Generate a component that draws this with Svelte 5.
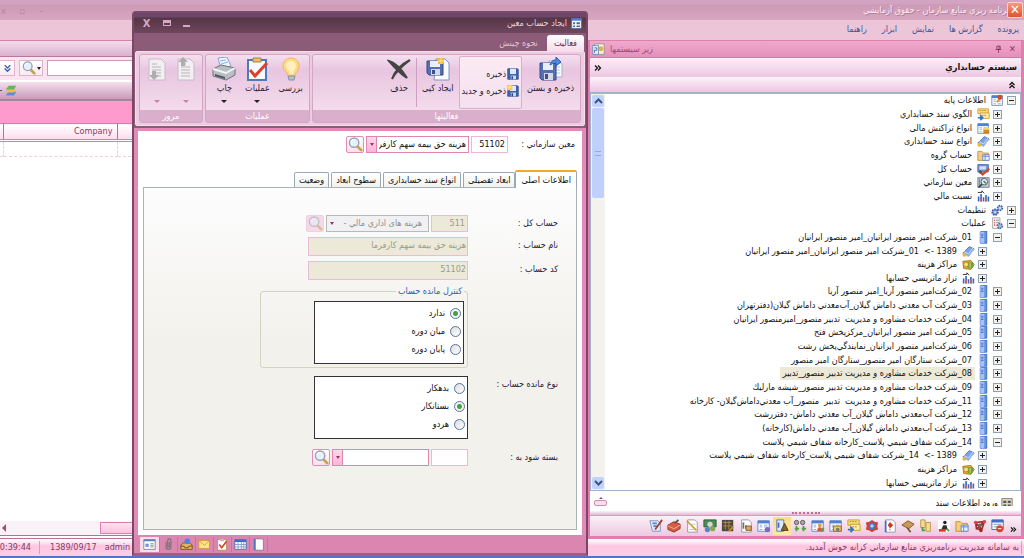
<script lang="ts">
  interface Node { label: string; level: number; icon: string; open?: boolean; selected?: boolean }

  const menus = ['پرونده', 'گزارش ها', 'نمایش', 'ابزار', 'راهنما'];

  const tree: Node[] = [
    { label: 'اطلاعات پایه', level: 0, icon: 'base', open: true },
    { label: 'الگوي سند حسابداري', level: 1, icon: 'pattern' },
    { label: 'انواع تراکنش مالی', level: 1, icon: 'coins' },
    { label: 'انواع سند حسابداری', level: 1, icon: 'books' },
    { label: 'حساب گروه', level: 1, icon: 'folder' },
    { label: 'حساب کل', level: 1, icon: 'ledger' },
    { label: 'معین سازماني', level: 1, icon: 'search' },
    { label: 'نسبت مالي', level: 1, icon: 'chart' },
    { label: 'تنظیمات', level: 0, icon: 'gears' },
    { label: 'عملیات', level: 0, icon: 'tasks', open: true },
    { label: '01_شرکت امیر منصور ایرانیان_امیر منصور ایرانیان', level: 1, icon: 'server', open: true },
    { label: '1389 ->  01_شرکت امیر منصور ایرانیان_امیر منصور ایرانیان', level: 2, icon: 'books' },
    { label: 'مراکز هزینه', level: 2, icon: 'money' },
    { label: 'تراز ماتریسي حسابها', level: 2, icon: 'chart' },
    { label: '02_شرکت‌امیر منصور آریا_امیر منصور آریا', level: 1, icon: 'server' },
    { label: '03_شرکت آب معدني داماش گیلان_آب‌معدني داماش گیلان(دفترتهران', level: 1, icon: 'server' },
    { label: '04_شرکت خدمات مشاوره و مدیریت  تدبیر منصور_امیرمنصور ایرانیان', level: 1, icon: 'server' },
    { label: '05_شرکت امیر منصور ایرانیان_مرکزپخش فتح', level: 1, icon: 'server' },
    { label: '06_شرکت‌امیر منصور ایرانیان_نمایندگي‌پخش رشت', level: 1, icon: 'server' },
    { label: '07_شرکت ستارگان امیر منصور_ستارگان امیر منصور', level: 1, icon: 'server' },
    { label: '08_شرکت خدمات مشاوره و مدیریت تدبیر منصور_تدبیر', level: 1, icon: 'server', selected: true },
    { label: '09_شرکت خدمات مشاوره و مدیریت تدبیر منصور_شیشه مارلیك', level: 1, icon: 'server' },
    { label: '11_شرکت خدمات مشاوره و مدیریت  تدبیر  منصور_آب معدني‌داماش‌گیلان- کارخانه', level: 1, icon: 'server' },
    { label: '12_شرکت آب‌معدني داماش گیلان_آب معدني داماش- دفتررشت', level: 1, icon: 'server' },
    { label: '13_شرکت آب‌معدني داماش گیلان_آب معدني داماش(کارخانه)', level: 1, icon: 'server' },
    { label: '14_شرکت شفاف شیمي پلاست_کارخانه شفاف شیمي پلاست', level: 1, icon: 'server', open: true },
    { label: '1389 ->  14_شرکت شفاف شیمي پلاست_کارخانه شفاف شیمي پلاست', level: 2, icon: 'books' },
    { label: 'مراکز هزینه', level: 2, icon: 'money' },
    { label: 'تراز ماتریسي حسابها', level: 2, icon: 'chart' },
  ];

  const shortcuts = [
    'calendarRed', 'molecule', 'folder', 'person', 'docs', 'hammer', 'redDoc', 'badge', 'pattern', 'report',
    'people', 'balance', 'form', 'notes', 'grid', 'ledgerDark', 'cash', 'draft', 'box', 'edit',
  ];
  const footTabs = ['card', 'clip', 'inbox', 'mail', 'check', 'calendar', 'page'];
  const tabs = ['اطلاعات اصلی', 'ابعاد تفصیلی', 'انواع سند حسابداری', 'سطوح ابعاد', 'وضعیت'];

  let activeTab = $state(0);
  let control = $state('ندارد');
  let nature = $state('بستانکار');

  const page = '<path d="M3 1h8l3 3v11H3z" fill="#fff" stroke="#8a93a8"/>';
  const table = '<path d="M1 2h13v12H1z" fill="#fff" stroke="#5c7fc0"/><path d="M1 2h13v3H1z" fill="#4f7fd6"/><path d="M3 7h3M8 7h4M3 9h3M8 9h4M3 12h3M8 12h4" stroke="#8ba5d6"/>';
  const floppy = '<path d="M1 1h13l1 1v13H1z" fill="#3e63ae" stroke="#28468b"/><path d="M4 1h8v7H4z" fill="#dfe9fb"/><path d="M5 10h7v5H5z" fill="#cfd4dc"/><path d="M6 11h2v4H6z" fill="#28468b"/>';

  // 16x16 glyphs
  const small: Record<string, string> = {
    base: table + '<path d="M9 2l4 4M7 10l5-5" stroke="#e0902a" stroke-width="2"/><circle cx="11" cy="4" r="3" fill="#d8492a"/>',
    pattern: '<path d="M1 1h13v6H1z" fill="#f8dc78" stroke="#c79a30"/><path d="M4 6h11v7H4z" fill="#fbe9a4" stroke="#c79a30"/><path d="M3 3h8M6 9h6" stroke="#b18222" stroke-dasharray="2 1"/><path d="M1 12h5M4 9l3 3-3 3" stroke="#2f6fe0" stroke-width="2" fill="none"/>',
    coins: table + '<path d="M8 8h7v7H8z" fill="#e8a92c"/><ellipse cx="11.500" cy="8" rx="3.500" ry="1.500" fill="#fbd667"/><path d="M8 11h7M8 13h7" stroke="#a86c10"/>',
    books: '<path d="M1 10L9 2l6 3-7 9z" fill="#7ea4e8" stroke="#3f62ae"/><path d="M1 10l7 4 7-9M2 8l6 3 6-8" stroke="#dce7fb" fill="none"/><circle cx="3" cy="12" r="2.500" fill="#e7b63d"/>',
    folder: '<path d="M1 3h5l2 2h6v9H1z" fill="#f5cf73" stroke="#c08e2b"/><path d="M7 7h8v7H7z" fill="#e7f0ff" stroke="#5b83c8"/><path d="M7 9h8M10 7v7" stroke="#5b83c8"/>',
    ledger: '<path d="M1 2h13v9H1z" fill="#6f96df" stroke="#3d5ea6"/><path d="M3 4h8v4H3z" fill="#d4e2fa"/><path d="M3 10l4 4 8-7" stroke="#c8502a" stroke-width="3" fill="none"/><circle cx="4" cy="11" r="2" fill="#555"/>',
    search: '<path d="M1 2h14v12H1z" fill="#b8c7dd" stroke="#687a97"/><path d="M3 3v10M6 3v10" stroke="#5c7ea5"/><circle cx="9" cy="7" r="4" fill="#e8f2f6" stroke="#444"/><path d="M6 10l-4 4" stroke="#444" stroke-width="2"/><path d="M8 6l3 3" stroke="#3f9850" stroke-width="2"/>',
    chart: '<path d="M2 14V8M5 14V5M8 14V9M11 14V6M14 14V8" stroke="#3568c8" stroke-width="2"/><path d="M1 3h5V1l3 3" stroke="#111" fill="none"/><path d="M5 10v4M11 10v4" stroke="#e25a3a" stroke-width="2"/>',
    gears: '<circle cx="5" cy="10" r="3.500" fill="#7e9de0" stroke="#3e5cab" stroke-width="2" stroke-dasharray="2 1"/><circle cx="11" cy="5" r="3" fill="#a2b9ec" stroke="#3e5cab" stroke-width="2" stroke-dasharray="2 1"/><circle cx="5" cy="10" r="1" fill="#fff"/><circle cx="11" cy="5" r="1" fill="#fff"/>',
    tasks: '<path d="M2 1h9v13H2z" fill="#f8f8f8" stroke="#999"/><path d="M4 4h1M4 7h1M4 10h1" stroke="#d33" stroke-width="2"/><path d="M6 4h4M6 7h4M6 10h2" stroke="#777"/><circle cx="11" cy="11" r="3" fill="#a5b6de" stroke="#506bab" stroke-width="2" stroke-dasharray="2 1"/>',
    server: '<path d="M4 1l8-1v15H4z" fill="#5f8fe8" stroke="#3563bd"/><path d="M4 1h5v14H4z" fill="#a5c3f7"/><path d="M5 4h3M5 6h3M5 8h3" stroke="#3d68b8"/>',
    money: '<path d="M1 4l10-1 4 5-4 6-9-1z" fill="#e5b03a" stroke="#a37113"/><circle cx="10" cy="9" r="4" fill="#62a83e"/><circle cx="5" cy="8" r="3" fill="#f7df83" stroke="#ad7d1a"/><path d="M10 6v6" stroke="#f5e68a"/>',
    calendar: '<path d="M1 2h14v12H1z" fill="#fff" stroke="#43639c"/><path d="M1 2h14v3H1z" fill="#3e6dcc"/><path d="M1 8h14M1 11h14M5 5v9M9 5v9M12 5v9" stroke="#7994c8"/>',
    calendarRed: '<path d="M1 1h13v11H1z" fill="#fff" stroke="#43639c"/><path d="M1 1h13v3H1z" fill="#3e6dcc"/><path d="M3 6h9M3 9h6" stroke="#6c8ac4"/><circle cx="10" cy="11" r="4" fill="#d7452c"/><path d="M8 11h4" stroke="#fff"/>',
    molecule: '<path d="M3 4l10-1-3 9-6-1zM3 4l7 8M13 3L4 11" stroke="#a42d2d" fill="none" stroke-width="2"/><circle cx="3" cy="4" r="2" fill="#d44"/><circle cx="13" cy="3" r="2" fill="#d44"/><circle cx="9" cy="13" r="2" fill="#a22"/><circle cx="8" cy="7" r="2" fill="#666"/>',
    person: '<path d="M1 1h14v14H1z" fill="#fff"/><circle cx="9" cy="4" r="2" fill="#222"/><path d="M7 7h4l1 5H5z" fill="#333"/><path d="M2 13h8" stroke="#d8362a" stroke-width="3"/><path d="M11 11l3 3" stroke="#4a9d3c" stroke-width="2"/>',
    docs: '<path d="M2 1h5v9H2zM8 4h5v10H8z" fill="#f4dc95" stroke="#b79242"/><path d="M4 9v4h3" stroke="#4f9a3b" stroke-width="2" fill="none"/>',
    hammer: '<path d="M1 7l7-5 7 4-6 5z" fill="#c79a58" stroke="#7c5520"/><path d="M7 10l4 5" stroke="#805b2a" stroke-width="2"/>',
    redDoc: page + '<path d="M3 2v13" stroke="#3d70cf" stroke-width="2"/><path d="M8 4l3 3-3 3-2-3zM8 11v2" fill="#d72f22" stroke="#d72f22"/>',
    badge: '<path d="M8 1l3 2 4 1-1 4 1 4-4 1-3 2-3-2-4-1 1-4-1-4 4-1z" fill="#d63c2f"/><circle cx="8" cy="8" r="4" fill="#4f76c6"/><path d="M6 8h4M8 6v4" stroke="#fff"/>',
    report: table + '<path d="M5 8h9v6H5z" fill="#f1c35c" stroke="#906a1e"/><circle cx="10" cy="12" r="2" fill="#777"/>',
    people: table + '<circle cx="10" cy="7" r="2" fill="#e09a3a"/><path d="M7 14c0-6 6-6 6 0z" fill="#dd5535"/><path d="M12 10h3v4h-3z" fill="#55a645"/>',
    balance: '<circle cx="4" cy="4" r="2.500" fill="#a7a7a7" stroke="#555"/><circle cx="11" cy="4" r="2.500" fill="#a7a7a7" stroke="#555"/><path d="M2 11h5M4 8v6M10 11h5M12 8v6" stroke="#4ca539" stroke-width="2"/>',
    form: '<path d="M2 1h8v13H2z" fill="#dce9ff" stroke="#4f76bd"/><path d="M4 4v6" stroke="#466ebd" stroke-width="2"/><path d="M7 13l4-8 4 8z" fill="#8b6227" stroke="#4d3512"/>',
    notes: table + '<circle cx="12" cy="12" r="3" fill="#7e65c6"/>',
    grid: page + '<path d="M5 4v7M8 7v4" stroke="#6f6f6f" stroke-width="2"/><path d="M8 8h6v5H8z" fill="#dca765" stroke="#805521"/>',
    ledgerDark: '<path d="M1 1h13v13H1z" fill="#51493f"/><path d="M2 4h10M5 2v10M9 2v10M2 8h11" stroke="#b18d4a"/><path d="M9 14l5-5" stroke="#d09023" stroke-width="2"/>',
    cash: '<path d="M1 1h14v8H1z" fill="#488e52" stroke="#275c35"/><circle cx="8" cy="6" r="3" fill="#d7d7d7"/><circle cx="5" cy="12" r="3" fill="#5d83c0"/><circle cx="11" cy="11" r="3" fill="#83a857"/>',
    draft: page + '<path d="M2 2l11 11" stroke="#d59b26" stroke-width="2"/><path d="M6 6h6M5 12h5" stroke="#bbc"/>',
    box: '<path d="M1 7l7-4 7 3v5l-7 4-7-3z" fill="#d55d40" stroke="#8a3422"/><path d="M1 8l7 3 7-4" stroke="#f7b5a4" fill="none"/><path d="M9 5l4-4" stroke="#555" stroke-width="2"/>',
    edit: '<path d="M1 2h9l3 3v9H4z" fill="#dfeafb" stroke="#7a8fb5"/><path d="M4 5h5M5 8h4" stroke="#5d83c7" stroke-width="2"/><path d="M7 12l8-11" stroke="#a53c28" stroke-width="2"/>',
    page: '<path d="M4 1h8l2 2v12H4z" fill="#fff" stroke="#777"/><path d="M3 1v14" stroke="#5377b8" stroke-width="2"/>',
    check: '<path d="M2 2h11v13H2z" fill="#fff" stroke="#b08a48"/><path d="M5 1h5v3H5z" fill="#bbb"/><path d="M4 8l3 4 6-8" stroke="#d8402c" stroke-width="2" fill="none"/>',
    mail: '<path d="M1 3h13v10H1z" fill="#ffe58a" stroke="#d0952a"/><path d="M1 3l7 6 6-6" stroke="#d0952a" fill="none"/>',
    inbox: '<path d="M1 9l3-3h8l3 3v5H1z" fill="#e4b45a" stroke="#6d4d1c"/><path d="M1 10h4l1 2h4l1-2h4" stroke="#54401e" fill="none"/><circle cx="9" cy="4" r="3.500" fill="#4b86e8"/>',
    clip: '<path d="M5 5v6c0 4 6 4 6 0V4c0-4-4-4-4 0v7h2V5" stroke="#777" fill="none" stroke-width="1.500"/>',
    card: '<path d="M1 2h14v12H1z" fill="#fff" stroke="#66789a"/><path d="M1 3h14" stroke="#5a7fbd" stroke-width="2"/><path d="M3 7h4v4H3z" fill="#6f95d8"/><path d="M9 7h4M9 9h4M9 11h4" stroke="#777"/>',
    window: '<path d="M1 1h14v14H1z" fill="#fff" stroke="#3f6fc9"/><path d="M1 1h14v3H1z" fill="#477fe2"/><path d="M3 6h3v3H3zM3 11h3v2H3zM8 6h5v3H8zM8 11h5v2H8z" fill="#54688f"/>',
    lens: '<path d="M10 10l4 4" stroke="#c8a24c" stroke-width="3" stroke-linecap="round"/><circle cx="6.500" cy="6" r="5" fill="#e3f1fb" stroke="#9aa0ac" stroke-width="1.500"/><path d="M3 6c0-3 3-3 4-3" stroke="#fff" fill="none"/>',
    layers: '<path d="M4 9h11l-3 5H1z" fill="#5b8de2"/><path d="M4 6h11l-3 4H1z" fill="#f1bd42"/><path d="M5 1h10l-3 5H1z" fill="#6bb35a"/>',
    disk: floppy,
    diskNew: floppy + '<path d="M0 0h7v7H0z" fill="#f9c65a"/><path d="M3 1v5M1 3h5" stroke="#fff2ae"/>',
    modules: '<path d="M3 1h12v13H3z" fill="#f3efe2" stroke="#9a8c74"/><path d="M1 3h7v11H1z" fill="#e5f0fc" stroke="#5f88bd"/><path d="M3 6h3v3H3v3" stroke="#355c9c" fill="none"/><circle cx="11" cy="7" r="3" fill="#e0b14d"/>',
    pin: '<path d="M5 2h6v6H5zM3 8h10M8 8v6M9 2v6" stroke="#8b3463" fill="none" stroke-width="1.500"/>',
    entry: '<path d="M1 2h14v12H1z" fill="#ddd5c4" stroke="#776f60"/><path d="M3 5h4v3H3zM9 5h4v3H9zM3 10h4v2H3zM9 10h4v2H9z" fill="#555"/>',
    dblDown: '<path d="M3 2l5 5 5-5M3 8l5 5 5-5" stroke="currentColor" stroke-width="2.500" fill="none"/>',
    dblUp: '<path d="M3 8l5-5 5 5M3 14l5-5 5 5" stroke="currentColor" stroke-width="2.500" fill="none"/>',
    dblRight: '<path d="M2 3l5 5-5 5M8 3l5 5-5 5" stroke="currentColor" stroke-width="2.500" fill="none"/>',
  };

  const greyDoc = '<path d="M4 2h12l4 4v17H4z" fill="#f2eef1" stroke="#c4bec2"/><path d="M7 7h5M7 10h9M7 13h9M7 16h9M7 19h9" stroke="#b9b4b8"/>';

  // 24x24 glyphs
  const big: Record<string, string> = {
    saveClose: '<path d="M10 4h9l4 3v13H10z" fill="#f7fbff" stroke="#9fb2cf"/><path d="M17 10h4M17 13h4M17 16h4" stroke="#b7c5dc"/><path d="M1 6h16v17H3l-2-2z" fill="#566fb2" stroke="#344b8a"/><path d="M4 6h10v7H4z" fill="#e9effa"/><path d="M5 16h9v7H5z" fill="#d5d9e2"/><path d="M6 17h3v5H6z" fill="#3c528e"/><path d="M11 8c1-4 3-5 6-5V0l5 5-5 4V6c-3 0-4 1-6 2z" fill="#4e8be6" stroke="#275cae"/>',
    copy: '<path d="M10 2h9l4 4v17H8z" fill="#f9fbff" stroke="#7f95bd"/><path d="M1 4h16v14H3l-2-2z" fill="#566fb2" stroke="#344b8a"/><path d="M4 4h10v6H4z" fill="#e9effa"/><path d="M5 12h9v6H5z" fill="#d5d9e2"/><path d="M6 13h3v4H6z" fill="#3c528e"/><path d="M12 1h6v6h-6z" fill="#f5b640"/><path d="M15 1v6M12 4h6" stroke="#ffe68e"/>',
    remove: '<path d="M2 4c7 2 13 9 18 17C14 17 8 11 2 4z" fill="#444" stroke="#444" stroke-width="2"/><path d="M23 3C15 7 8 14 5 22 8 16 15 9 23 3z" fill="#555" stroke="#444" stroke-width="2"/>',
    bulb: '<path d="M12 1c5 0 8 4 8 8 0 5-4 6-4 10H9c0-4-5-5-5-10 0-4 3-8 8-8z" fill="#ffd986" stroke="#f2b757"/><path d="M12 4c3 0 5 2 5 5s-3 4-3 8h-3c0-4-4-5-4-8s2-5 5-5z" fill="#fff0bd"/><path d="M9 19h7l-1 4h-5z" fill="#b9bcc4" stroke="#8c919c"/>',
    tasks: '<path d="M3 3h18v20H3z" fill="#f7faff" stroke="#4f78bf" stroke-width="2"/><path d="M8 1h8v4H8z" fill="#e9c06a" stroke="#a8823c"/><path d="M5 13l5 6L22 6" stroke="#e0402a" stroke-width="3" fill="none"/>',
    print: '<path d="M6 1l9-1 4 9-10 3z" fill="#eef5ff" stroke="#8aa2cc"/><path d="M8 4l6-1M9 7l7-2" stroke="#8cb0e8"/><path d="M1 12l8-4 14 3v7l-9 5-13-4z" fill="#b9bdc4" stroke="#6e737c"/><path d="M1 12l13 4 9-5" stroke="#f4f5f7" fill="none" stroke-width="2"/><path d="M3 17l10 3v2L3 19z" fill="#50545c"/>',
    next: greyDoc + '<path d="M7 14h4v4h3l-5 5-5-5h3z" fill="#b1abaf"/>',
    prev: greyDoc + '<path d="M7 9h4V5h3L9 0 4 5h3z" fill="#b1abaf"/>',
  };
</script>

{#snippet icon(name: string, size = 16)}
  <svg class="icon" width={size} height={size} viewBox="0 0 16 16" aria-hidden="true">{@html small[name]}</svg>
{/snippet}

{#snippet command(name: string, label: string, arrow = false, disabled = false)}
  <button class="command" class:disabled aria-label={label || name}>
    <svg width="24" height="24" viewBox="0 0 24 24" aria-hidden="true">{@html big[name]}</svg>
    <span class="command-label">{label}</span>
    {#if arrow}<span class="caret"></span>{/if}
  </button>
{/snippet}

{#snippet radios(name: string, options: string[], value: string, pick: (v: string) => void)}
  <div class="radio-box">
    {#each options as option}
      <label class="radio">
        <input type="radio" {name} checked={value === option} onchange={() => pick(option)} />
        <span>{option}</span>
      </label>
    {/each}
  </div>
{/snippet}

{#snippet lensButton(disabled = false)}
  <button class="lens" {disabled} aria-label="جستجو">{@render icon('lens', 15)}</button>
{/snippet}

<div class="shell">
  <header class="titlebar">
    <div class="ghost-controls"><span>x</span><span>▫</span><span>–</span></div>
    <div class="app-title" dir="rtl">
      <button class="close-app" aria-label="بستن">✕</button>
      <span>برنامه ریزي منابع سازمان - حقوق آزمایشي</span>
    </div>
  </header>
  <nav class="menubar" dir="rtl">
    {#each menus as menu}<button>{menu}</button>{/each}
  </nav>

  <div class="workspace">
    <main class="listing">
      <div class="strip"></div>
      <div class="toolbar">
        <button class="tool expand" aria-label="بیشتر">{@render icon('dblDown', 9)}</button>
        <button class="tool find" aria-label="جستجو">{@render icon('lens', 14)}<span class="caret"></span></button>
        <input class="find-box" aria-label="عبارت جستجو" />
      </div>
      <div class="toolbar-two">
        <span class="dash"></span>{@render icon('layers', 12)}
      </div>
      <div class="banner"></div>
      <table class="data">
        <thead><tr><th class="edge"></th><th class="company">Company</th><th></th></tr></thead>
        <tbody><tr><td class="edge"></td><td class="company"></td><td></td></tr></tbody>
      </table>
      <div class="hscroll"><span class="left-arrow"></span><span class="hthumb"></span></div>
    </main>

    <aside class="subsystems" dir="rtl">
      <div class="pane-head">
        <button aria-label="بستن">✕</button>
        <button aria-label="سنجاق">{@render icon('pin', 9)}</button>
        <span class="pane-title">زیر سیستمها</span>
        {@render icon('modules', 13)}
      </div>
      <div class="pane-name"><strong>سیستم حسابداري</strong>{@render icon('dblRight', 8)}</div>
      <div class="pane-fold">{@render icon('dblUp', 8)}</div>
      <div class="tree-box">
        <ul class="tree">
          {#each tree as node}
            <li class="level-{node.level}">
              <button class="toggle" class:open={node.open} aria-label={node.label}></button>
              {@render icon(node.icon, 13)}
              <span class="node" class:selected={node.selected}>{node.label}</span>
            </li>
          {/each}
        </ul>
        <div class="vscroll">
          <button class="varrow" aria-label="بالا"><svg width="9" height="6" viewBox="0 0 9 6"><path d="M1 5l3.500-3.500L8 5" fill="none" stroke="#3c5488" stroke-width="2" /></svg></button>
          <div class="vthumb"><span class="grip"></span></div>
          <button class="varrow end" aria-label="پایین"><svg width="9" height="6" viewBox="0 0 9 6"><path d="M1 1l3.500 3.500L8 1" fill="none" stroke="#3c5488" stroke-width="2" /></svg></button>
        </div>
      </div>
      <div class="next-item">
        <div class="cut">{@render icon('entry', 12)}<span>ورود اطلاعات سند</span></div>
        <button class="lift" aria-label="بازکردن"><span></span></button>
      </div>
      <div class="splitter"><span></span></div>
      <div class="shortcuts">
        <button class="more" aria-label="بیشتر">{@render icon('dblRight', 7)}</button>
        {#each shortcuts as name}
          <button class="shortcut" class:on={name === 'form'} aria-label={name}>{@render icon(name, 14)}</button>
        {/each}
      </div>
    </aside>
  </div>

  <footer class="statusbar">
    <span class="clock">10:39:44</span>
    <span class="date">1389/09/17</span>
    <span class="user">admin</span>
    <span class="welcome" dir="rtl">به سامانه مدیریت برنامه‌ریزي منابع سازماني کرانه خوش آمدید.</span>
  </footer>

  <section class="dialog" dir="rtl">
    <div class="dialog-title">
      {@render icon('window', 11)}
      <span>ایجاد حساب معین</span>
      <div class="dialog-controls" dir="ltr">
        <button aria-label="بستن">X</button>
        <button aria-label="بزرگ"><i class="max"></i></button>
        <button aria-label="کوچک"><i class="min"></i></button>
      </div>
    </div>
    <div class="ribbon-tabs">
      <button class="active">فعالیت</button>
      <button>نحوه چینش</button>
    </div>
    <div class="ribbon">
      <div class="group wide">
        <div class="commands">
          {@render command('saveClose', 'ذخیره و بستن')}
          <div class="stack">
            <button>{@render icon('disk', 12)}ذخیره</button>
            <button>{@render icon('diskNew', 12)}ذخیره و جدید</button>
          </div>
          {@render command('copy', 'ایجاد کپی')}
          <span class="rule"></span>
          {@render command('remove', 'حذف')}
        </div>
        <div class="caption">فعالیتها</div>
      </div>
      <div class="group mid">
        <div class="commands">
          {@render command('bulb', 'بررسی')}
          {@render command('tasks', 'عملیات', true)}
          {@render command('print', 'چاپ', true)}
        </div>
        <div class="caption">عملیات</div>
      </div>
      <div class="group narrow">
        <div class="commands">
          {@render command('prev', '', true, true)}
          {@render command('next', '', true, true)}
        </div>
        <div class="caption">مرور</div>
      </div>
    </div>

    <div class="dialog-body">
      <div class="lookup top-lookup">
        <label class="field-label" for="org">معین سازماني :</label>
        <input id="org" class="code" value="51102" />
        <div class="combo"><select aria-label="معین"><option>هزینه حق بیمه سهم کارفرما</option></select><span class="drop"></span></div>
        {@render lensButton()}
      </div>
      <div class="tabs">
        {#each tabs as tab, i}
          <button class:active={i === activeTab} onclick={() => (activeTab = i)}>{tab}</button>
        {/each}
      </div>
      <div class="tab-panel">
        <div class="lookup">
          <label class="field-label" for="total">حساب کل :</label>
          <input id="total" class="code" value="511" disabled />
          <div class="combo off"><select aria-label="حساب کل" disabled><option>هزینه های اداري مالي -</option></select><span class="drop"></span></div>
          {@render lensButton(true)}
        </div>
        <div class="lookup">
          <label class="field-label" for="name">نام حساب :</label>
          <input id="name" class="full" value="هزینه حق بیمه سهم کارفرما" disabled />
        </div>
        <div class="lookup">
          <label class="field-label" for="code">کد حساب :</label>
          <input id="code" class="full" value="51102" disabled />
        </div>
        <fieldset>
          <legend>کنترل مانده حساب</legend>
          {@render radios('control', ['ندارد', 'میان دوره', 'پایان دوره'], control, (v) => (control = v))}
        </fieldset>
        <div class="lookup nature">
          <span class="field-label">نوع مانده حساب :</span>
          {@render radios('nature', ['بدهکار', 'بستانکار', 'هردو'], nature, (v) => (nature = v))}
        </div>
        <div class="lookup">
          <label class="field-label" for="closed">بسته شود به :</label>
          <input id="closed" class="code" />
          <div class="combo short"><select aria-label="بسته شود به"><option></option></select><span class="drop"></span></div>
          {@render lensButton()}
        </div>
      </div>
    </div>
    <div class="foot-tabs" dir="ltr">
      {#each footTabs as name, i}
        <button class:active={i === 0} aria-label={name}>{@render icon(name, 13)}</button>
      {/each}
    </div>
  </section>
</div>

<style>
  :global(body) { background: #fff; }
  .shell {
    position: relative;
    display: flex;
    flex-direction: column;
    height: 100vh;
    box-sizing: border-box;
    overflow: hidden;
    border-bottom: 2px solid #5873c0;
    font: 9px/13px "DejaVu Sans Condensed", "DejaVu Sans", sans-serif;
    color: #111;
  }
  .shell :global(*) { box-sizing: border-box; }
  button, input, select {
    font: inherit;
    color: inherit;
    margin: 0;
    padding: 0;
    border: 0;
    background: none;
    border-radius: 0;
  }
  button { white-space: nowrap; }
  .icon { flex: none; display: block; }

  .titlebar {
    display: flex;
    justify-content: space-between;
    height: 20px;
    flex: none;
    background: linear-gradient(#d4a5c3 0, #d2a2bf 4px, #cd9ab5 5px, #d6a6bf);
  }
  .ghost-controls { display: flex; gap: 14px; padding: 5px 0 0 1px; color: #b57fa4; }
  .app-title { display: flex; align-items: center; padding-right: 1px; color: #fbe9f3; text-shadow: 1px 1px #b2799b; }
  .close-app {
    width: 16px;
    height: 16px;
    margin-left: -2px;
    z-index: 1;
    border: 1px solid #f6d5c8;
    border-radius: 2px;
    background: linear-gradient(#f49a80, #dd5530);
    color: #fff;
    font-size: 13px;
    line-height: 12px;
    text-shadow: none;
  }
  .menubar {
    display: flex;
    flex: none;
    gap: 15px;
    height: 20px;
    padding: 0 5px 2px;
    background: #ecc5d8;
    color: #3d5794;
  }

  .workspace { display: flex; flex: 1; min-height: 0; }
  .listing { flex: 1; min-width: 0; display: flex; flex-direction: column; background: #fff; border-top: 1px solid #db7fac; border-bottom: 4px double #bd6c99; }
  .strip { height: 16px; flex: none; background: linear-gradient(#f4dcea, #d9b2d0); border-bottom: 1px solid #b47a9b; }
  .toolbar { display: flex; gap: 4px; height: 25px; flex: none; padding: 3px 0 4px; background: #f9e4ef; border-bottom: 2px solid #fff; }
  .tool { display: flex; align-items: center; justify-content: center; border: 1px solid #e0b3cd; background: linear-gradient(#fff, #f9eaf3); color: #3b5fa8; }
  .tool.expand { width: 15px; border-left: 0; }
  .tool.find { width: 24px; gap: 1px; }
  .find-box { flex: 1; border: 1px solid #d695b8; background: #fff; }
  .caret { width: 0; height: 0; border: 2px solid transparent; border-top: 3px solid #222; border-bottom: 0; }
  .toolbar-two { display: flex; align-items: center; gap: 3px; height: 19px; flex: none; background: linear-gradient(#f4dfec, #c89bbc); border-bottom: 2px solid #9c899a; }
  .dash { width: 2px; height: 1px; background: #555; }
  .banner { height: 22px; flex: none; background: #ff9bcc; }
  .data { width: 100%; table-layout: fixed; border-collapse: collapse; flex: none; }
  .data th { height: 17px; padding: 0 4px 0 0; text-align: right; font-weight: normal; color: #8b3a69; background: linear-gradient(#fff, #fbdcec); border-top: 1px solid #e07aac; border-bottom: 3px double #d77fab; }
  .data th.edge, .data th.company { border-right: 1px solid #c76c9a; }
  .data td { height: 16px; border: 1px dashed #efcfe0; border-left: 0; }
  .data .edge { width: 3px; padding: 0; }
  .data .company { width: 114px; }
  .hscroll { display: flex; align-items: center; height: 14px; flex: none; margin-top: auto; background: #fbf2f7; }
  .left-arrow { border: 4px solid transparent; border-right: 4px solid #a8467a; border-left: 0; margin-left: 2px; }
  .hthumb { flex: 1; height: 12px; margin-left: 94px; border: 1px solid #dc80af; background: linear-gradient(#ffe3f0, #ffbfdd); }

  .subsystems {
    width: 436px;
    flex: none;
    display: flex;
    flex-direction: column;
    border: solid #df7fae;
    border-width: 1px 3px 3px 2px;
    background: #fff;
  }
  .pane-head { display: flex; align-items: center; gap: 5px; height: 17px; flex: none; padding: 0 4px 0 2px; background: linear-gradient(#f0a9cd, #e391ba); border-bottom: 1px solid #c97ba3; color: #8b3463; }
  .pane-head button { width: 9px; }
  .pane-title { margin-right: auto; color: #9c4c78; }
  .pane-name { display: flex; align-items: center; justify-content: space-between; height: 19px; flex: none; padding: 0 4px; background: linear-gradient(#fcf0f8, #ecc6e2); }
  .pane-name strong { font-size: 9px; }
  .pane-fold { display: flex; align-items: center; height: 15px; flex: none; padding: 0 5px; background: linear-gradient(#fdf3f9, #ecc6e2); }
  .tree-box { display: flex; flex: 1; min-height: 0; border: 1px solid #9fb3cd; border-top-width: 2px; background: #fff; }
  .tree { flex: 1; min-width: 0; display: grid; grid-auto-rows: 1fr; margin: 0; padding: 0 4px 0 0; list-style: none; overflow: hidden; }
  .tree li { display: flex; align-items: center; min-height: 0; white-space: pre; }
  .level-1 { padding-right: 14px; }
  .level-2 { padding-right: 29px; }
  .toggle {
    width: 9px;
    height: 9px;
    margin-left: 3px;
    flex: none;
    border: 1px solid #8ba0bb;
    background:
      linear-gradient(#222, #222) center / 5px 1px no-repeat,
      linear-gradient(#222, #222) center / 1px 5px no-repeat,
      #f3f1ec;
  }
  .toggle.open { background: linear-gradient(#222, #222) center / 5px 1px no-repeat, #f3f1ec; }
  .node { margin-right: 2px; padding: 0 3px; }
  .node.selected { background: #ece9d8; }
  .vscroll { display: flex; flex-direction: column; width: 14px; padding: 1px; background: #f4f2ec; }
  .varrow { display: flex; align-items: center; justify-content: center; height: 12px; border-radius: 2px; background: #c2d3fb; }
  .varrow.end { margin-top: auto; }
  .vthumb { display: grid; place-items: center; height: 90px; margin-top: 1px; border-radius: 2px; background: #bfd1fb; }
  .grip { width: 6px; height: 5px; border: solid #94abe2; border-width: 1px 0; }
  .next-item { display: flex; align-items: center; justify-content: space-between; height: 20px; flex: none; padding: 0 8px 0 4px; }
  .cut { display: flex; gap: 3px; height: 9px; overflow: hidden; }
  .lift { display: flex; flex-direction: column; align-items: center; width: 13px; }
  .lift::before { content: ""; border: 2px solid transparent; border-top: 0; border-bottom: 2px solid #6c5590; }
  .lift span { width: 13px; height: 6px; margin-top: 1px; border: 1px solid #cf8db0; border-radius: 2px; background: #f8deeb; }
  .splitter { display: flex; justify-content: center; align-items: center; height: 5px; flex: none; background: linear-gradient(#fdf0f7, #eab6d3); border-bottom: 1px solid #d99abd; }
  .splitter span { width: 28px; border-top: 2px dotted #c06d97; }
  .shortcuts { display: flex; align-items: center; height: 20px; flex: none; background: linear-gradient(#fdf0f8, #edc8e1); padding-right: 2px; }
  .shortcut { display: flex; align-items: center; justify-content: center; width: 18px; height: 18px; }
  .shortcut.on { background: linear-gradient(#ffd98a, #fbe9a4); }
  .more { width: 12px; padding: 0 2px 3px; align-self: flex-end; }

  .statusbar { display: flex; align-items: center; height: 17px; flex: none; background: linear-gradient(#fff 0, #fbe3ef 4px, #ffc5e0 7px, #ffcfe5); color: #843c66; white-space: nowrap; }
  .clock { display: flex; justify-content: flex-end; width: 40px; padding-right: 8px; border-right: 1px solid #dc9dbd; overflow: hidden; }
  .date { margin-left: 10px; }
  .user { margin-left: 8px; }
  .welcome { margin: 0 2px 0 auto; padding-right: 2px; border-right: 1px solid #dc9dbd; }

  .dialog {
    position: absolute;
    inset: 11px 436px 0 132px;
    display: flex;
    flex-direction: column;
    border: 2px solid #7c4766;
    border-bottom: 3px solid #a55b80;
    border-radius: 4px 4px 0 0;
    background: #8b5b77;
  }
  .dialog-title { display: flex; align-items: center; gap: 4px; height: 20px; flex: none; padding: 0 4px 0 8px; background: linear-gradient(#6b4769 0, #6b4769 4px, #553546 5px, #6f475c); color: #e8cfdf; }
  .dialog-controls { display: flex; gap: 11px; margin-right: auto; font-size: 11px; font-weight: bold; color: #d6a9c2; }
  .dialog-controls button { display: grid; place-items: center; width: 9px; height: 12px; }
  .max { width: 8px; height: 6px; border: 1px solid #d6a9c2; border-top-width: 3px; }
  .min { width: 7px; height: 2px; margin-top: 6px; background: #d6a9c2; }
  .ribbon-tabs { display: flex; gap: 2px; height: 18px; flex: none; padding: 2px 2px 0; color: #e3c4d5; }
  .ribbon-tabs button { padding: 0 7px; }
  .ribbon-tabs .active { border-radius: 3px 3px 0 0; background: linear-gradient(#fff, #f6dcea); color: #5d3057; }
  .ribbon { display: flex; gap: 2px; height: 75px; flex: none; margin: 0 1px; padding: 2px 3px; border: 1px solid #f7dcec; border-radius: 2px; background: #edcbe3; }
  .group { display: flex; flex-direction: column; border: 1px solid #d3a6c4; border-radius: 3px; background: linear-gradient(#f4e0ef 0, #e8c5e0 15px, #f4dcec 55px); }
  .group.wide { flex: 1; }
  .group.mid { width: 105px; }
  .group.narrow { width: 64px; }
  .commands { display: flex; flex: 1; min-height: 0; padding: 1px 2px; }
  .mid .commands, .narrow .commands { justify-content: space-around; }
  .caption { height: 12px; color: #fff; text-align: center; line-height: 12px; background: #d9afcb; }
  .command { display: flex; flex-direction: column; align-items: center; padding: 1px 4px 0; min-width: 28px; color: #2c1c33; }
  .command-label { height: 13px; margin: 1px 0 5px; }
  .command .caret { border-width: 3px 3px 0; }
  .disabled .caret { border-top-color: #c286a9; }
  .stack { display: flex; flex-direction: column; justify-content: center; gap: 4px; margin: 0 1px; padding: 0 2px; border: 1px solid #dcaecb; border-radius: 2px; background: linear-gradient(#fbeaf4, #f4e0ee); color: #2c1c33; }
  .stack button { display: flex; align-items: center; gap: 1px; }
  .rule { width: 1px; margin: 2px 1px; background: #cf9fbf; }

  .dialog-body { display: flex; flex-direction: column; flex: 1; min-height: 0; margin-top: 2px; padding: 5px; border: 4px solid #e28bb8; border-top-width: 3px; border-bottom: 0; background: #fff; }
  .lookup { display: flex; align-items: flex-start; gap: 2px; }
  .field-label { width: 88px; padding-top: 2px; color: #2a2040; white-space: nowrap; }
  .code { width: 37px; height: 17px; border: 1px solid #efb5d5; padding: 0 2px 2px; background: #fff; }
  .full { width: 160px; height: 19px; border: 1px solid #ecbbd8; padding: 0 1px 3px; background: #fff; }
  .code:disabled, .full:disabled { background: #ece9d8; color: #9b9a90; border-color: #ecbbd8; }
  .combo { display: flex; width: 103px; height: 17px; border: 1px solid #df86b0; background: #fff; overflow: hidden; }
  .combo.short { width: 97px; }
  .combo select { flex: 1; min-width: 0; appearance: none; padding: 0 2px; outline: 0; }
  .drop { display: grid; place-items: center; width: 10px; flex: none; background: linear-gradient(#ffd9ea, #ffb3d6); border-right: 1px solid #df86b0; }
  .drop::after { content: ""; border: 2px solid transparent; border-top: 3px solid #9c2f66; border-bottom: 0; }
  .combo.off { border-color: #b9b9b9; background: #f1f0f2; color: #8f8f8f; }
  .combo.off select { opacity: 1; color: inherit; padding-right: 6px; }
  .combo.off .drop { background: none; border: 0; }
  .lens { display: grid; place-items: center; width: 18px; height: 17px; border: 1px solid #df8fb6; border-radius: 2px; background: linear-gradient(#fff, #f8dfec); }
  .lens:disabled { border-color: #f3cfe2; background: #f4d9e8; }
  .lens:disabled .icon { opacity: 0.5; }
  .top-lookup { padding-right: 2px; }
  .top-lookup .field-label { width: 65px; }
  .tabs { display: flex; align-items: flex-end; gap: 2px; height: 19px; flex: none; margin-top: 15px; }
  .tabs button { height: 15px; padding: 0 4px; border: 1px solid #9aa8b8; border-bottom: 0; border-radius: 2px 2px 0 0; background: linear-gradient(#fff, #f1f1ee); }
  .tabs .active { z-index: 1; height: 18px; margin: 0 0 -1px -2px; padding: 0 5px; border-top: 2px solid #f0a830; background: #fff; }
  .tab-panel { display: flex; flex-direction: column; gap: 5px; flex: 1; min-height: 0; padding: 27px 18px 0; border: 1px solid #a9b3b5; background: linear-gradient(#fdfdfe, #f2f1ec 45%); }
  fieldset { width: 208px; height: 83px; margin: 0 90px 3px 0; padding: 4px 3px 0; border: 1px solid #d3d3c0; border-radius: 3px; }
  legend { padding: 0 2px; color: #2d5bc0; line-height: 12px; }
  .radio-box { display: flex; flex-direction: column; gap: 3px; width: 154px; height: 63px; padding: 4px 2px; border: 1px solid #333; background: #fff; }
  fieldset .radio-box { width: 150px; }
  .radio { display: flex; align-items: center; gap: 5px; height: 15px; }
  .radio input { appearance: none; width: 11px; height: 11px; border: 1px solid #5872a8; border-radius: 50%; background: linear-gradient(135deg, #dcdcd8, #fff); }
  .radio input:checked { background: radial-gradient(circle, #3fa53a 0, #3fa53a 2px, #f4f4f2 3px); }
  .nature { margin-bottom: 5px; }
  .foot-tabs { display: flex; align-items: center; height: 18px; flex: none; padding-left: 6px; background: #db86b1; }
  .foot-tabs button { display: grid; place-items: center; width: 18px; height: 15px; border-right: 1px solid #c673a0; }
  .foot-tabs .active { width: 20px; background: #fbdcea; }
</style>
